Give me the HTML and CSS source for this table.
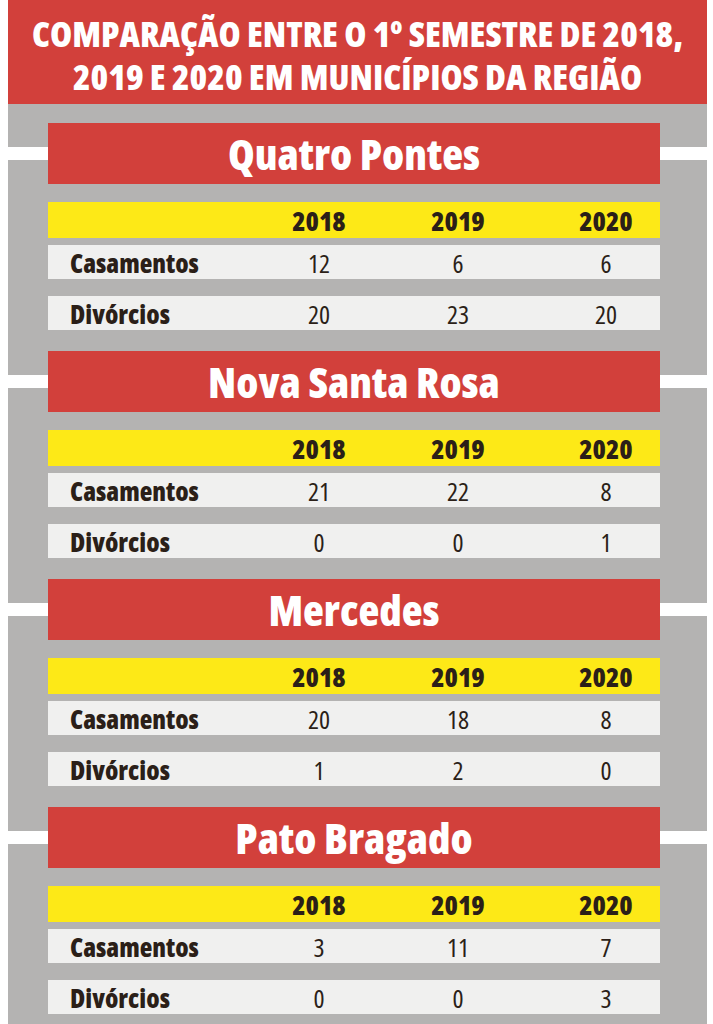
FILE: index.html
```html
<!DOCTYPE html>
<html lang="pt-BR">
<head>
<meta charset="utf-8">
<title>Comparação entre o 1º semestre</title>
<link rel="stylesheet" href="styles.css">
</head>
<body>
<div class="page">
  <header class="header">
    <h1 class="title">COMPARAÇÃO ENTRE O 1º SEMESTRE DE 2018,<br>2019 E 2020 EM MUNICÍPIOS DA REGIÃO</h1>
  </header>
  <main class="content">
    <section class="city">
      <div class="band"><h2 class="city-name">Quatro Pontes</h2></div>
      <div class="table">
        <div class="row head"><span class="label"></span><span class="cell">2018</span><span class="cell">2019</span><span class="cell">2020</span></div>
        <div class="row data"><span class="label">Casamentos</span><span class="cell">12</span><span class="cell">6</span><span class="cell">6</span></div>
        <div class="row data"><span class="label">Divórcios</span><span class="cell">20</span><span class="cell">23</span><span class="cell">20</span></div>
      </div>
    </section>
    <section class="city">
      <div class="band"><h2 class="city-name">Nova Santa Rosa</h2></div>
      <div class="table">
        <div class="row head"><span class="label"></span><span class="cell">2018</span><span class="cell">2019</span><span class="cell">2020</span></div>
        <div class="row data"><span class="label">Casamentos</span><span class="cell">21</span><span class="cell">22</span><span class="cell">8</span></div>
        <div class="row data"><span class="label">Divórcios</span><span class="cell">0</span><span class="cell">0</span><span class="cell">1</span></div>
      </div>
    </section>
    <section class="city">
      <div class="band"><h2 class="city-name">Mercedes</h2></div>
      <div class="table">
        <div class="row head"><span class="label"></span><span class="cell">2018</span><span class="cell">2019</span><span class="cell">2020</span></div>
        <div class="row data"><span class="label">Casamentos</span><span class="cell">20</span><span class="cell">18</span><span class="cell">8</span></div>
        <div class="row data"><span class="label">Divórcios</span><span class="cell">1</span><span class="cell">2</span><span class="cell">0</span></div>
      </div>
    </section>
    <section class="city">
      <div class="band"><h2 class="city-name">Pato Bragado</h2></div>
      <div class="table">
        <div class="row head"><span class="label"></span><span class="cell">2018</span><span class="cell">2019</span><span class="cell">2020</span></div>
        <div class="row data"><span class="label">Casamentos</span><span class="cell">3</span><span class="cell">11</span><span class="cell">7</span></div>
        <div class="row data"><span class="label">Divórcios</span><span class="cell">0</span><span class="cell">0</span><span class="cell">3</span></div>
      </div>
    </section>
  </main>
</div>
</body>
</html>
```
FILE: styles.css
```css
html, body {
  margin: 0;
  padding: 0;
  background: #ffffff;
}

body {
  font-family: "Open Sans", "DejaVu Sans Condensed", sans-serif;
  font-stretch: 75%;
  height: 1024px;
  overflow: hidden;
}

.page {
  width: 699px;
  margin-left: 8px;
}

.header {
  height: 104px;
  background: #d2403b;
  box-sizing: border-box;
  padding-top: 12px;
}

.title {
  margin: 0;
  color: #ffffff;
  font-size: 35.7px;
  font-weight: 800;
  line-height: 43px;
  text-align: center;
  white-space: nowrap;
}

.content {
  background: #b4b3b2;
  padding-top: 19px;
  min-height: 950px;
}

.city {
  padding-bottom: 21px;
}

.band {
  height: 61px;
  background: linear-gradient(to bottom, #b4b3b2 0, #b4b3b2 24px, #ffffff 24px, #ffffff 37px, #b4b3b2 37px);
}

.city-name {
  margin: 0 47px 0 40px;
  height: 61px;
  background: #d2403b;
  color: #ffffff;
  font-size: 43px;
  font-weight: 800;
  line-height: 61px;
  text-align: center;
}

.table {
  margin: 18px 47px 0 40px;
  display: flex;
  flex-direction: column;
}

.row {
  display: grid;
  grid-template-columns: 226px 90px 188px 108px;
  align-items: center;
  color: #2b1f18;
}

.row .cell {
  text-align: center;
}

.row .label {
  padding-left: 22px;
  font-weight: 800;
  font-size: 26px;
}

.head {
  height: 36px;
  background: #fde917;
  font-weight: 800;
  font-size: 27px;
}

.data {
  height: 34px;
  background: #f0f0ef;
  font-size: 26px;
  font-weight: 400;
  margin-top: 7px;
}

.data + .data {
  margin-top: 17px;
}
```
